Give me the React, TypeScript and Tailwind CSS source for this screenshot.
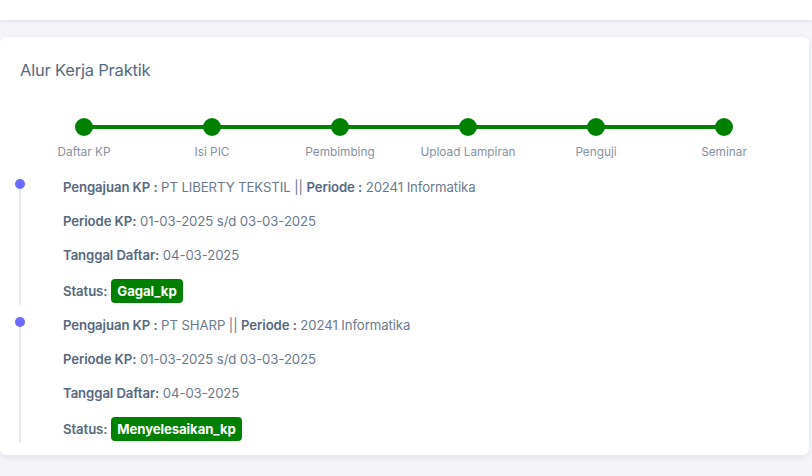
import React from "react";

const steps = ["Daftar KP", "Isi PIC", "Pembimbing", "Upload Lampiran", "Penguji", "Seminar"];

const items = [
  { company: "PT LIBERTY TEKSTIL", status: "Gagal_kp" },
  { company: "PT SHARP", status: "Menyelesaikan_kp" },
];

export default function App() {
  return (
    <div
      className="w-[812px] h-[476px] bg-[#f5f5f9] overflow-hidden"
      style={{ fontFamily: "Inter, 'Noto Sans', sans-serif" }}
    >
      <div className="h-[20px] bg-white shadow-[0_1px_4px_rgba(67,89,113,0.15)]" />
      <div className="mt-[17px] w-[809px] h-[418px] bg-white rounded-md shadow-[0_2px_6px_rgba(67,89,113,0.12)] px-[20px] pt-[22px]">
        <h5 className="text-[16.5px] leading-[22px] text-[#566a7f] font-normal tracking-[-0.2px]">Alur Kerja Praktik</h5>

        <div className="relative mt-[35px] grid grid-cols-6 w-[768px]">
          <div className="absolute left-[64px] right-[64px] top-[9px] h-[4px] bg-[#008000]" />
          {steps.map((s) => (
            <div key={s} className="relative flex flex-col items-center">
              <div className="w-[18px] h-[18px] rounded-full bg-[#008000] mt-[2px]" />
              <div className="mt-[8px] text-[11.8px] leading-[16px] text-[#8592a3]">{s}</div>
            </div>
          ))}
        </div>

        <div className="mt-[17px] -ml-[20px] w-[700px]">
          {items.map((it, i) => (
            <div key={i} className="relative pl-[63px] pb-[12px]">
              <div className="absolute left-[19px] top-[6px] bottom-[10px] w-[2px] bg-[#e7e9ec]" />
              <div className="absolute left-[15px] top-[2px] w-[10px] h-[10px] rounded-full bg-[#696cff]" />
              <div className="text-[13.2px] leading-[20px] text-[#697a8d] flex flex-col gap-[14px] tracking-[-0.1px]">
                <div>
                  <b className="font-semibold text-[#566a7f]">Pengajuan KP :</b> {it.company} ||{" "}
                  <b className="font-semibold text-[#566a7f]">Periode :</b> 20241 Informatika
                </div>
                <div>
                  <b className="font-semibold text-[#566a7f]">Periode KP:</b> 01-03-2025 s/d 03-03-2025
                </div>
                <div>
                  <b className="font-semibold text-[#566a7f]">Tanggal Daftar:</b> 04-03-2025
                </div>
                <div className="flex items-center gap-[4px]">
                  <b className="font-semibold text-[#566a7f]">Status:</b>
                  <span className="bg-[#008000] text-white font-bold rounded-[4px] px-[6px] h-[24px] flex items-center text-[13.2px]">
                    {it.status}
                  </span>
                </div>
              </div>
            </div>
          ))}
        </div>
      </div>
    </div>
  );
}
